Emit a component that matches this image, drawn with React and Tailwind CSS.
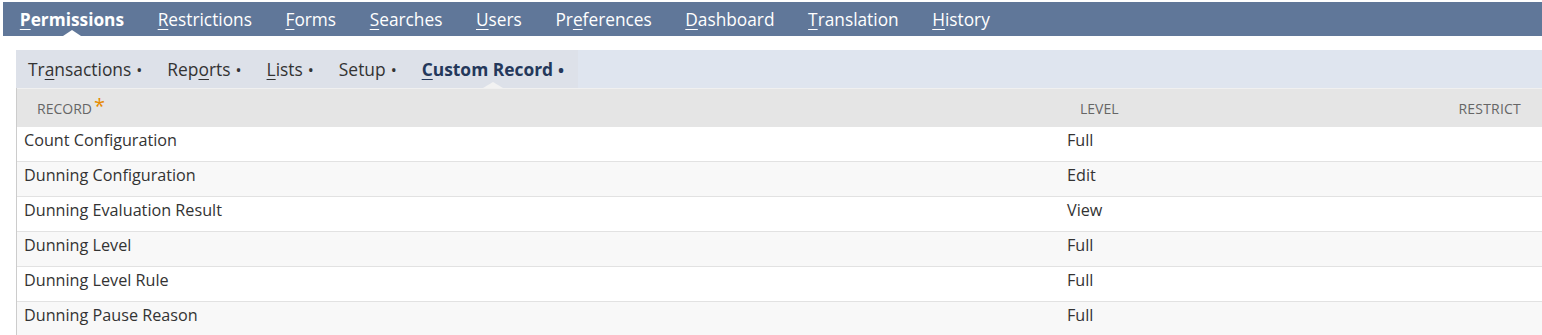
import React from 'react';

const topTabs = [
  { pre: '', key: 'P', post: 'ermissions', active: true },
  { pre: '', key: 'R', post: 'estrictions' },
  { pre: '', key: 'F', post: 'orms' },
  { pre: '', key: 'S', post: 'earches' },
  { pre: '', key: 'U', post: 'sers' },
  { pre: 'Pr', key: 'e', post: 'ferences' },
  { pre: '', key: 'D', post: 'ashboard' },
  { pre: '', key: 'T', post: 'ranslation' },
  { pre: '', key: 'H', post: 'istory' },
];

const subTabs = [
  { pre: 'Tr', key: 'a', post: 'nsactions' },
  { pre: 'Rep', key: 'o', post: 'rts' },
  { pre: '', key: 'L', post: 'ists' },
  { pre: 'Setup', key: '', post: '' },
  { pre: '', key: 'C', post: 'ustom Record', active: true },
];

const rows = [
  ['Count Configuration', 'Full'],
  ['Dunning Configuration', 'Edit'],
  ['Dunning Evaluation Result', 'View'],
  ['Dunning Level', 'Full'],
  ['Dunning Level Rule', 'Full'],
  ['Dunning Pause Reason', 'Full'],
];

function Label({ t }) {
  return (
    <>
      {t.pre}
      {t.key && <span className="underline underline-offset-[3px] decoration-1">{t.key}</span>}
      {t.post}
    </>
  );
}

export default function App() {
  return (
    <div className="min-h-screen bg-white pl-[3px] pt-[2px] font-['Open_Sans',sans-serif] overflow-hidden">
      {/* main tabs */}
      <nav className="h-[34px] bg-[#607799] flex items-center">
        {topTabs.map((t, i) => (
          <div
            key={i}
            className={`relative h-full flex items-center pt-[1px] px-[16.8px] text-[17.3px] text-white ${t.active ? 'font-bold' : ''}`}
          >
            <Label t={t} />
            {t.active && (
              <span className="absolute bottom-0 left-1/2 -translate-x-1/2 w-0 h-0 border-l-[9px] border-r-[9px] border-b-[6px] border-l-transparent border-r-transparent border-b-white" />
            )}
          </div>
        ))}
      </nav>

      <div className="ml-[13px] mt-[14px]">
        {/* sub tabs */}
        <div className="h-[38px] bg-[#dfe5ef] flex">
          <div className="h-full flex items-center bg-[#dde1e9] pl-[12px] pr-[14px]">
            {subTabs.map((t, i) => (
              <div
                key={i}
                className={`relative h-full flex items-center text-[17.4px] ${i > 0 ? 'ml-[25px]' : ''} ${t.active ? 'font-bold text-[#24385b]' : 'text-[#333333]'}`}
              >
                <span>
                  <Label t={t} />
                  <span className="ml-[5px] text-[16px]">•</span>
                </span>
                {t.active && (
                  <span className="absolute bottom-0 left-1/2 -translate-x-1/2 w-0 h-0 border-l-[10px] border-r-[10px] border-b-[6px] border-l-transparent border-r-transparent border-b-[#f2f2f2]" />
                )}
              </div>
            ))}
          </div>
        </div>

        {/* table */}
        <div className="border-l border-[#cccccc]">
          <div className="h-[39px] bg-[#e5e5e5] border-t border-[#f0f0f0] flex items-center text-[14px] text-[#666666] uppercase">
            <div className="w-[1042px] pl-[20px] flex items-center">
              RECORD
              <span className="text-[#e58a00] text-[20px] leading-none ml-[2px] -mt-[4px]">*</span>
            </div>
            <div className="flex-1 pl-[21px]">LEVEL</div>
            <div className="w-[140px] text-right pr-[21px] tracking-[0.2px]">RESTRICT</div>
          </div>
          {rows.map(([name, level], i) => (
            <div
              key={i}
              className={`h-[35px] flex items-start pt-[1px] border-b border-[#e2e2e2] text-[16.2px] text-[#333333] ${i % 2 === 1 ? 'bg-[#f8f8f8]' : 'bg-white'}`}
            >
              <div className="w-[1042px] pl-[7px]">{name}</div>
              <div className="flex-1 pl-[8px]">{level}</div>
              <div className="w-[140px]" />
            </div>
          ))}
        </div>
      </div>
    </div>
  );
}
